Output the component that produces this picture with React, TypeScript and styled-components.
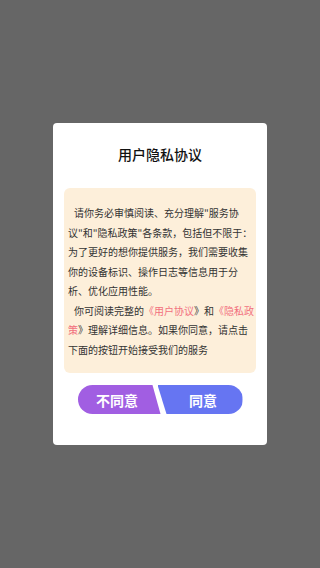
import React from "react";
import styled, { createGlobalStyle } from "styled-components";

const GlobalStyle = createGlobalStyle`
  html, body {
    margin: 0;
    padding: 0;
    background: #666666;
    font-family: "Noto Sans CJK SC", "Noto Sans", sans-serif;
  }
`;

export default function App() {
  return (
    <>
      <GlobalStyle />
      <Containers.Overlay>
        <Containers.Modal>
          <Title>用户隐私协议</Title>
          <Containers.Notice>
            <Paragraph>
              请你务必审慎阅读、充分理解"服务协
              <br />
              议"和"隐私政策"各条款，包括但不限于：
              <br />
              为了更好的想你提供服务，我们需要收集
              <br />
              你的设备标识、操作日志等信息用于分
              <br />
              析、优化应用性能。
            </Paragraph>
            <Paragraph>
              你可阅读完整的<Link>《用户协议</Link>》和<Link>《隐私政</Link>
              <br />
              <Link>策</Link>》理解详细信息。如果你同意，请点击
              <br />
              下面的按钮开始接受我们的服务
            </Paragraph>
          </Containers.Notice>
          <Containers.Actions>
            <ActionButton $variant="reject">不同意</ActionButton>
            <ActionButton $variant="accept">同意</ActionButton>
          </Containers.Actions>
        </Containers.Modal>
      </Containers.Overlay>
    </>
  );
}

const Title = styled.h1`
  margin: 0;
  font-size: 14px;
  line-height: 20px;
  font-weight: 500;
  color: #111;
  text-align: center;
`;

const Paragraph = styled.p`
  margin: 0;
  text-indent: 6px;
  white-space: nowrap;
`;

const Link = styled.span`
  color: #f2707e;
`;

const ActionButton = styled.button<{ $variant: "reject" | "accept" }>`
  height: 29px;
  border: 0;
  padding: 0;
  outline: none;
  cursor: pointer;
  color: #fff;
  font-family: inherit;
  font-size: 14px;
  font-weight: 700;

  ${({ $variant }) =>
    $variant === "reject"
      ? `
    width: 83px;
    padding-right: 4px;
    background: #a15ee2;
    border-radius: 15px 0 0 15px;
    clip-path: polygon(0 0, calc(100% - 8px) 0, 100% 100%, 0 100%);
  `
      : `
    width: 85px;
    margin-left: -3px;
    padding-left: 6px;
    background: #6675f2;
    border-radius: 0 15px 15px 0;
    clip-path: polygon(0 0, 100% 0, 100% 100%, 9px 100%);
  `}
`;

const Containers = {
  Overlay: styled.div`
    width: 100%;
    min-height: 100vh;

    display: flex;
    align-items: center;
    justify-content: center;
  `,
  Modal: styled.div`
    width: 214px;
    box-sizing: border-box;
    padding: 21px 11px 31px;

    display: flex;
    flex-direction: column;

    background: #fff;
    border-radius: 4px;
  `,
  Notice: styled.div`
    margin-top: 24px;
    padding: 15px 2px 14px 4px;

    background: #fdefda;
    border-radius: 6px;

    font-size: 10px;
    line-height: 19.5px;
    color: #333;
  `,
  Actions: styled.div`
    margin-top: 12px;

    display: flex;
    justify-content: center;
  `,
};
